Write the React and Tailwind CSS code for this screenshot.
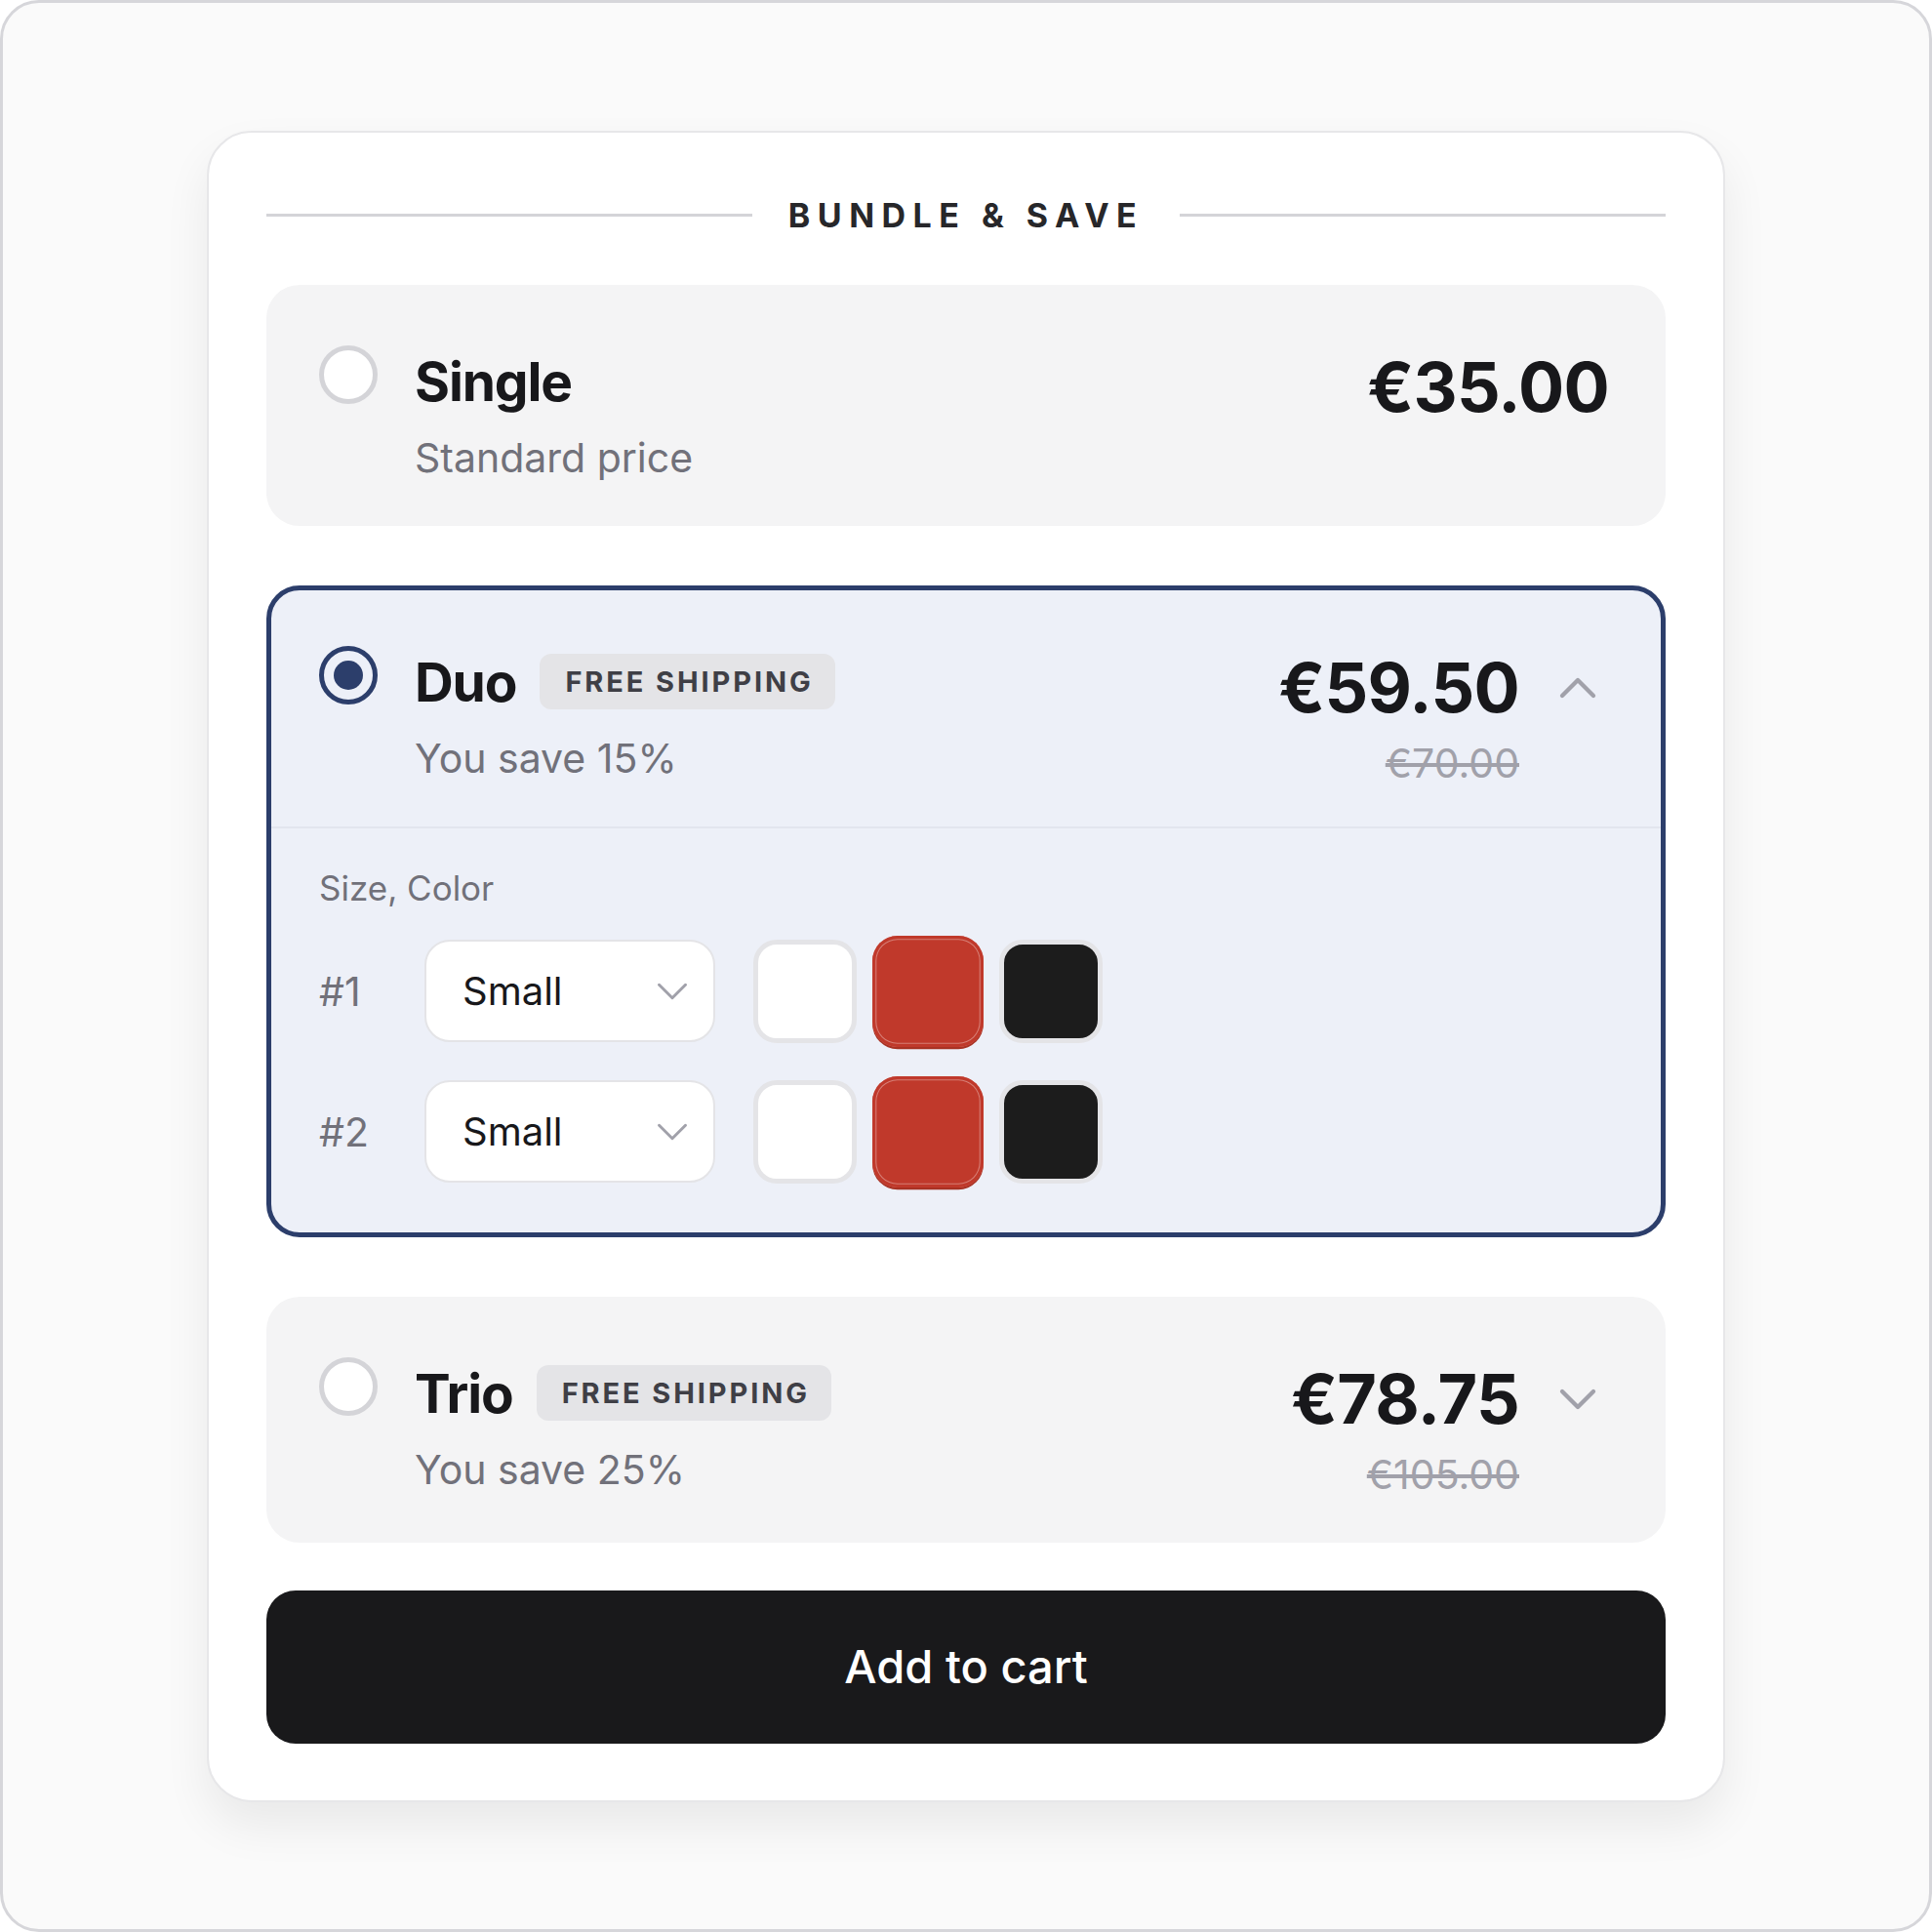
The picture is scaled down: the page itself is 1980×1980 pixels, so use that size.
import { useState } from 'react';
import { ChevronDown, ChevronUp } from 'lucide-react';

const BUNDLES = [
  { id: 'single', title: 'Single', subtitle: 'Standard price', price: '€35.00' },
  { id: 'duo', title: 'Duo', subtitle: 'You save 15%', price: '€59.50', oldPrice: '€70.00', badge: 'FREE SHIPPING', items: 2 },
  { id: 'trio', title: 'Trio', subtitle: 'You save 25%', price: '€78.75', oldPrice: '€105.00', badge: 'FREE SHIPPING', items: 3 },
];

const COLORS = ['white', 'red', 'black'];

const Radio = ({ checked }) =>
  checked ? (
    <div className="w-[60px] h-[60px] shrink-0 rounded-full border-[5px] border-[#2c3e6b] flex items-center justify-center">
      <div className="w-[30px] h-[30px] rounded-full bg-[#2c3e6b]" />
    </div>
  ) : (
    <div className="w-[60px] h-[60px] shrink-0 rounded-full border-[5px] border-[#d4d4d8] bg-white" />
  );

const Swatch = ({ color, selected }) => {
  if (color === 'red') {
    return (
      <button
        className={`w-[106px] h-[106px] rounded-[24px] bg-[#c0392b] shadow-[inset_0_0_0_3px_#c0392b,inset_0_0_0_4px_rgba(255,255,255,0.35),0_2px_0_#a83224] ${selected ? 'scale-[1.075]' : ''}`}
      />
    );
  }
  return (
    <button
      className={`w-[106px] h-[106px] rounded-[24px] border-[5px] border-[#e4e4e7] ${color === 'white' ? 'bg-white' : 'bg-[#1c1c1c]'}`}
    />
  );
};

const VariantRow = ({ index }) => (
  <div className="flex items-center h-[106px]">
    <span className="w-[68px] mr-[40px] text-[41px] leading-[52px] text-[#71717a]">#{index}</span>
    <div className="w-[298px] h-[105px] rounded-[26px] border-2 border-[#e4e4e7] bg-white flex items-center justify-between pl-[37px] pr-[15px]">
      <span className="text-[40px] leading-[52px] text-[#18181b]">Small</span>
      <ChevronDown size={54} strokeWidth={1.3} className="text-[#a1a1aa]" />
    </div>
    <div className="flex items-center gap-[20px] ml-[39px]">
      {COLORS.map((c) => (
        <Swatch key={c} color={c} selected={c === 'red'} />
      ))}
    </div>
  </div>
);

const BundleOption = ({ bundle, selected, onSelect }) => {
  const expandable = !!bundle.items;
  return (
    <div
      onClick={onSelect}
      className={`rounded-[34px] border-[5px] cursor-pointer ${selected ? 'border-[#2c3e6b] bg-[#edf0f8]' : 'border-transparent bg-[#f4f4f5]'}`}
    >
      <div className="flex items-start justify-between pt-[57px] pb-[39px] pl-[49px] pr-[53px]">
        <div className="flex items-start gap-[38px]">
          <Radio checked={selected} />
          <div className="flex flex-col mt-[4px]">
            <div className="flex items-center gap-[24px] h-[66px]">
              <span className="text-[55px] leading-[66px] font-bold tracking-[-0.02em] text-[#18181b]">{bundle.title}</span>
              {bundle.badge && (
                <span className="h-[57px] flex items-center pl-[26px] pr-[22px] rounded-[12px] bg-[#e4e4e7] text-[29px] font-bold tracking-[0.1em] text-[#3f3f46]">
                  {bundle.badge}
                </span>
              )}
            </div>
            <span className="mt-[19px] text-[41px] leading-[52px] text-[#71717a]">{bundle.subtitle}</span>
          </div>
        </div>
        <div className="flex items-start gap-[28px] mt-[1px]">
          <div className="flex flex-col items-end">
            <span className="text-[70px] leading-[84px] font-bold tracking-[-0.01em] text-[#18181b]">{bundle.price}</span>
            {bundle.oldPrice && (
              <span className="mt-[9px] text-[41px] leading-[52px] text-[#a1a1aa] line-through">{bundle.oldPrice}</span>
            )}
          </div>
          {expandable && (
            <div className="h-[84px] flex items-center">
              {selected ? (
                <ChevronUp size={64} strokeWidth={1.6} className="text-[#a1a1aa]" />
              ) : (
                <ChevronDown size={64} strokeWidth={1.6} className="text-[#a1a1aa]" />
              )}
            </div>
          )}
        </div>
      </div>

      {selected && expandable && (
        <div className="border-t-2 border-[#e2e5ee] pt-[39px] pb-[50px] px-[49px]">
          <div className="text-[35px] leading-[44px] text-[#71717a] mb-[31px]">Size, Color</div>
          <div className="flex flex-col gap-[38px]">
            {Array.from({ length: bundle.items }, (_, i) => (
              <VariantRow key={i} index={i + 1} />
            ))}
          </div>
        </div>
      )}
    </div>
  );
};

export default function App() {
  const [selected, setSelected] = useState('duo');

  return (
    <div
      className="w-[1980px] h-[1980px] bg-[#fafafa] border-[3px] border-[#d6d6da] rounded-[40px] flex items-center justify-center"
      style={{ fontFamily: 'Inter, "Liberation Sans", sans-serif' }}
    >
      <div className="w-[1556px] bg-white rounded-[46px] border-2 border-[#e7e7e9] shadow-[0_24px_48px_rgba(0,0,0,0.07)] px-[59px] pt-[60px] pb-[58px]">
        <div className="flex items-center gap-[37px] h-[50px] mb-[46px]">
          <div className="flex-1 h-[3px] bg-[#d4d4d8]" />
          <span className="text-[34px] font-bold tracking-[0.22em] text-[#27272a] leading-[50px]">BUNDLE &amp; SAVE</span>
          <div className="flex-1 h-[3px] bg-[#d4d4d8]" />
        </div>

        <div className="flex flex-col gap-[61px]">
          {BUNDLES.map((b) => (
            <BundleOption key={b.id} bundle={b} selected={selected === b.id} onSelect={() => setSelected(b.id)} />
          ))}
        </div>

        <button className="mt-[49px] w-full h-[157px] rounded-[30px] bg-[#19191b] text-white text-[47px] font-medium">
          Add to cart
        </button>
      </div>
    </div>
  );
}
